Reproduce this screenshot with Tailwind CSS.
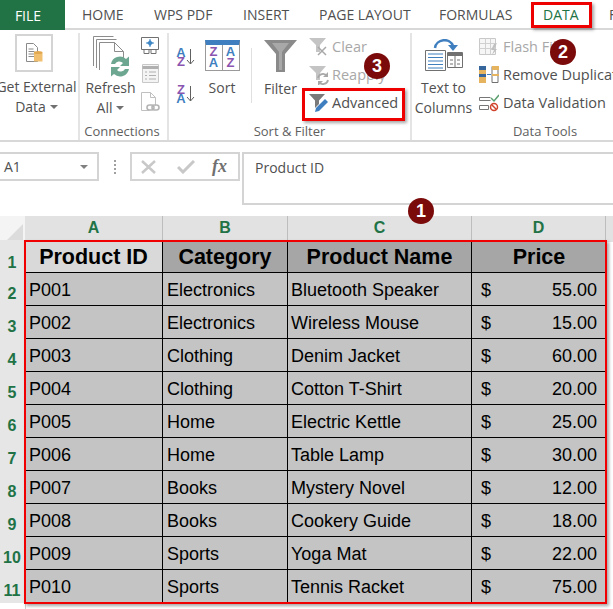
<!doctype html>
<html><head><meta charset="utf-8"><script src="https://cdn.jsdelivr.net/npm/@tailwindcss/browser@4"></script></head>
<body class="bg-white overflow-hidden">
<div class="relative w-[613px] h-[609px] overflow-hidden bg-white text-[#505050] font-['Open_Sans',sans-serif]">

<!-- tabs -->
<div class="flex items-center h-[30px] border-b-2 border-[#d8d8d8] text-[14px] text-[#505050] whitespace-nowrap">
  <div class="w-[65px] h-[30px] -mb-[2px] bg-[#217346] text-white flex items-center justify-center pr-[9px] shrink-0">FILE</div>
  <div class="ml-[17px] w-[72px] shrink-0">HOME</div>
  <div class="w-[89px] shrink-0">WPS PDF</div>
  <div class="w-[76px] shrink-0">INSERT</div>
  <div class="w-[120px] shrink-0">PAGE LAYOUT</div>
  <div class="w-[104px] shrink-0">FORMULAS</div>
  <div class="w-[66px] shrink-0 text-[#217346]">DATA</div>
  <div class="shrink-0">F</div>
</div>

<!-- ribbon -->
<div class="flex h-[112px] border-b-2 border-[#d8d8d8] text-[14px] leading-[20px] whitespace-nowrap">
  <!-- group 1 -->
  <div class="w-[78px] shrink-0 relative flex flex-col items-center pt-[4px]">
    <div class="w-[38px] h-[38px] border-2 border-[#d4d4d4] flex items-center justify-center ml-[-10px]">
      <svg width="18" height="20" viewBox="0 0 18 20"><path d="M1.500 .5h7l4 4v14h-11z" fill="#fff" stroke="#8a8a8a"/><path d="M3.500 6h5M3.500 8.500h6M3.500 11h6M3.500 13.500h6" stroke="#8a8a8a"/><path d="M9 9.500h8.500v9H9z" fill="#f0c070"/><ellipse cx="13.200" cy="9.500" rx="4.300" ry="1.600" fill="#e2a850"/></svg>
    </div>
    <div class="mt-[5px] text-center ml-[-5px] w-[84px] shrink-0">Get External</div>
    <div class="text-center ml-[-5px] flex items-center gap-[4px]">Data <span class="w-0 h-0 border-x-[4px] border-x-transparent border-t-[4px] border-t-[#707070]"></span></div>
  </div>
  <!-- group 2 -->
  <div class="w-[89px] shrink-0 border-l-2 border-[#e4e4e4] relative flex flex-col h-[107px] mt-[3px]">
    <div class="flex flex-1 pl-[5px]">
      <div class="w-[51px] flex flex-col items-center pt-[3px]">
        <svg width="38" height="42" viewBox="0 0 38 42" class="ml-[2px]">
          <path d="M.5 30V.5h20" fill="none" stroke="#8c8c8c"/><path d="M3.500 32V3.500h20" fill="none" stroke="#8c8c8c"/>
          <path d="M6.500 34V6.500h15l9 9v9" fill="#fff" stroke="#8c8c8c"/><path d="M21.500 6.500v9h9" fill="none" stroke="#8c8c8c"/>
          <path d="M18 28a9 9 0 0 1 15-5l3-2.500V30h-9l3-3a5 5 0 0 0-8 1z" fill="#6ea791"/>
          <path d="M36 32a9 9 0 0 1-15 5l-3 2.500V30h9l-3 3a5 5 0 0 0 8-1z" fill="#6ea791" transform="translate(0 1)"/>
        </svg>
        <div>Refresh</div>
        <div class="flex items-center gap-[4px]">All <span class="w-0 h-0 border-x-[4px] border-x-transparent border-t-[4px] border-t-[#707070]"></span></div>
      </div>
      <div class="w-[20px] flex flex-col items-center gap-[9px] ml-[4px] pt-[4px]">
        <svg width="19" height="18" viewBox="0 0 19 18"><path d="M.5.500h17v12H.5z" fill="#fff" stroke="#707070"/><path d="M9 3l3 3-3 3-3-3z" fill="#3f86c4"/><path d="M5 6h8M9 2v8" stroke="#3f86c4"/><path d="M3 13v3.500h5V13M10 13v3.500h5V13" fill="#fff" stroke="#707070"/></svg>
        <svg width="17" height="19" viewBox="0 0 17 19"><path d="M.5.500h16v18H.5z" fill="#f4f4f4" stroke="#c8c8c8"/><path d="M.5 3.500h16" stroke="#b0b0b0" stroke-width="3"/><path d="M3 8h2M3 11.500h2M3 15h2M7 8h7M7 11.500h7M7 15h7" stroke="#b0b0b0"/></svg>
        <svg width="19" height="20" viewBox="0 0 19 20"><path d="M.5.500h9l5 5v8M.5.500v18h8" fill="#fff" stroke="#c0c0c0"/><path d="M9.500.500v5h5" fill="none" stroke="#c0c0c0"/><rect x="6" y="13" width="7" height="5" rx="2.500" fill="none" stroke="#b4b4b4" stroke-width="1.600"/><rect x="11" y="13" width="7" height="5" rx="2.500" fill="none" stroke="#b4b4b4" stroke-width="1.600"/></svg>
      </div>
    </div>
    <div class="text-center text-[13px] text-[#606060] h-[22px] pt-[3px] pr-[3px]">Connections</div>
  </div>
  <!-- group 3 -->
  <div class="w-[243px] shrink-0 border-l-2 border-[#e4e4e4] relative flex flex-col h-[107px] mt-[3px]">
    <div class="flex flex-1">
      <div class="w-[30px] ml-[5px] flex flex-col items-start gap-[17px] pt-[14px] pl-[2px] text-[13px] font-bold leading-[9.500px] shrink-0">
        <div class="flex items-center w-[20px] h-[20px]"><div class="flex flex-col items-center w-[10px] font-['Liberation_Sans']"><span class="text-[#3f7fc0]">A</span><span class="text-[#8a55b0]">Z</span></div><svg width="9" height="18" viewBox="0 0 9 18"><path d="M4.500 1v15M1 12l3.500 4L8 12" fill="none" stroke="#606060"/></svg></div>
        <div class="flex items-center w-[20px] h-[20px]"><div class="flex flex-col items-center w-[10px] font-['Liberation_Sans']"><span class="text-[#8a55b0]">Z</span><span class="text-[#3f7fc0]">A</span></div><svg width="9" height="18" viewBox="0 0 9 18"><path d="M4.500 1v15M1 12l3.500 4L8 12" fill="none" stroke="#606060"/></svg></div>
      </div>
      <div class="w-[36px] flex flex-col items-center pt-[7px] shrink-0">
        <div class="w-[35px] h-[31px] border border-[#9a9a9a] border-t-[5px] border-t-[#3f7fbf] bg-white flex font-['Liberation_Sans'] font-bold text-[13px] leading-[11px] text-center">
          <div class="flex-1 border-r border-[#9a9a9a] flex flex-col pt-[1px]"><span class="text-[#8a55b0]">Z</span><span class="text-[#3f7fc0]">A</span></div>
          <div class="flex-1 flex flex-col pt-[1px]"><span class="text-[#3f7fc0]">A</span><span class="text-[#8a55b0]">Z</span></div>
        </div>
        <div class="mt-[7px]">Sort</div>
      </div>
      <div class="w-[12px] flex justify-end pt-[15px] shrink-0"><div class="w-[1px] h-[55px] bg-[#e0e0e0]"></div></div>
      <div class="w-[47px] ml-[5px] flex flex-col items-center pt-[7px] shrink-0">
        <svg width="33" height="32" viewBox="0 0 33 32"><path d="M0 0h33L21 14v18h-9V14z" fill="#8a8a8a"/><path d="M8 3h17l-7 9v18h-3V12z" fill="#bdbdbd" opacity=".6"/></svg>
        <div class="mt-[7px]">Filter</div>
      </div>
      <div class="flex flex-col pl-[5px] pt-[4px] gap-[8px] text-[14.500px]">
        <div class="flex items-center gap-[3px] h-[20px] text-[#a8a8a8]"><svg width="20" height="20" viewBox="0 0 20 20"><path d="M0 1h17l-6 7v7H7V8z" fill="#c4c4c4"/><path d="M9 10l8 8m0-8l-8 8" stroke="#a8a8a8" stroke-width="1.500"/></svg>Clear</div>
        <div class="flex items-center gap-[3px] h-[20px] text-[#a8a8a8]"><svg width="20" height="20" viewBox="0 0 20 20"><path d="M0 1h17l-6 7v7H7V8z" fill="#c4c4c4"/><path d="M9 13a5 5 0 0 1 9-2M19 15a5 5 0 0 1-9 2" fill="none" stroke="#a8a8a8" stroke-width="1.800"/><path d="M19 7v5h-5zM9 21v-5h5z" fill="#a8a8a8"/></svg>Reapply</div>
        <div class="flex items-center gap-[3px] h-[20px]"><svg width="20" height="20" viewBox="0 0 20 20"><path d="M0 1h16l-6 6.500V11L6 15V7.500z" fill="#7a7a7a"/><path d="M6 19l1-4 9-9 3 3-9 9z" fill="#3f7fbf"/></svg>Advanced</div>
      </div>
    </div>
    <div class="text-center text-[13px] text-[#606060] h-[22px] pt-[3px]">Sort &amp; Filter</div>
  </div>
  <!-- group 4 -->
  <div class="w-[268px] shrink-0 border-l-2 border-[#e4e4e4] relative flex flex-col h-[107px] mt-[3px]">
    <div class="flex flex-1">
      <div class="w-[55px] ml-[4px] flex flex-col items-center pt-[6px] shrink-0">
        <svg width="38" height="32" viewBox="0 0 38 32">
          <path d="M.5 11.500h20v20H.5z" fill="#fff" stroke="#707070"/><path d="M3 15h15M3 18.500h15M3 22h15M3 25.500h15M3 29h15" stroke="#3f7fbf"/>
          <path d="M22.500 13.500h15v15h-15z" fill="#fff" stroke="#707070"/><path d="M22.500 15.500h15" stroke="#707070" stroke-width="3"/><path d="M30 16v12M25 21h3M32 21h3M25 25h3M32 25h3" stroke="#707070"/>
          <path d="M10 9C11 0 25-2 28 7" fill="none" stroke="#3f7fbf" stroke-width="2.500"/><path d="M23 6h10l-5 6z" fill="#3f7fbf"/>
        </svg>
        <div class="mt-[7px]">Text to</div>
        <div>Columns</div>
      </div>
      <div class="flex flex-col pl-[8px] pt-[4px] gap-[8px] text-[14.500px]">
        <div class="flex items-center gap-[4px] h-[20px] text-[#a8a8a8]"><svg width="20" height="18" viewBox="0 0 20 18"><path d="M.5.500h16v16H.5z" fill="#f6f6f6" stroke="#c8c8c8"/><path d="M.5 5.500h16M.5 10.500h16M6.500.5v16M11.500.5v16" stroke="#d0d0d0"/><path d="M15 6l3-1-3 6h3l-5 6 2-5h-3z" fill="#c0c0c0"/></svg>Flash Fill</div>
        <div class="flex items-center gap-[4px] h-[20px]"><svg width="20" height="18" viewBox="0 0 20 18"><path d="M0 0h7v17H0z" fill="#e6b35e"/><path d="M0 0h7v4H0zM0 8h7v3H0z" fill="#37669c"/><path d="M13 .5h6v16h-6z" fill="#fff" stroke="#707070"/><path d="M13 0h7v4h-7zM13 8h7v2h-7z" fill="#e6b35e"/><path d="M8 8.500h4" stroke="#3f7fbf"/></svg>Remove Duplicates</div>
        <div class="flex items-center gap-[4px] h-[20px]"><svg width="20" height="18" viewBox="0 0 20 18"><path d="M.5 3.500h11M.5 3.500v3h11M.5 11.500h9v4h-9z" fill="none" stroke="#777"/><path d="M12 4l3 3 5-6" fill="none" stroke="#5aa070" stroke-width="1.500"/><circle cx="15" cy="13" r="3.500" fill="#fff" stroke="#d0442c" stroke-width="1.500"/><path d="M12.500 10.500l5 5" stroke="#d0442c" stroke-width="1.500"/></svg>Data Validation</div>
      </div>
    </div>
    <div class="text-center text-[13px] text-[#606060] h-[22px] pt-[3px]">Data Tools</div>
  </div>
</div>

<!-- formula bar -->
<div class="flex mt-[10px] h-[53px] text-[14px] text-[#505050]">
  <div class="w-[99px] h-[29px] border-2 border-l-0 border-[#d4d4d4] flex items-center justify-between pl-[4px] pr-[9px] shrink-0">A1 <span class="w-0 h-0 border-x-[4px] border-x-transparent border-t-[4px] border-t-[#808080]"></span></div>
  <div class="w-[31px] h-[29px] flex flex-col items-center justify-center gap-[2px] pl-[1px] shrink-0"><span class="w-[2px] h-[2px] bg-[#a0a0a0]"></span><span class="w-[2px] h-[2px] bg-[#a0a0a0]"></span><span class="w-[2px] h-[2px] bg-[#a0a0a0]"></span><span class="w-[2px] h-[2px] bg-[#a0a0a0]"></span></div>
  <div class="w-[110px] h-[29px] border-2 border-[#d4d4d4] flex items-center shrink-0 pl-[9px]">
    <svg width="16" height="14" viewBox="0 0 16 14"><path d="M1 1l13 12M14 1L1 13" stroke="#c8c8c8" stroke-width="2.500"/></svg>
    <svg class="ml-[20px]" width="18" height="14" viewBox="0 0 18 14"><path d="M1 7l5 5 11-11" fill="none" stroke="#c8c8c8" stroke-width="3"/></svg>
    <span class="ml-[17px] font-['Liberation_Serif'] italic font-bold text-[18px] text-[#707070]">fx</span>
  </div>
  <div class="flex-1 h-[53px] ml-[2px] border-2 border-r-0 border-[#d4d4d4] pl-[11px] pt-[3px]">Product ID</div>
</div>

<!-- sheet -->
<div class="mt-[11px] font-['Liberation_Sans'] text-black">
  <div class="grid grid-cols-[25px_138px_125px_184px_134px_7px] h-[24px] font-bold text-[16px] text-[#217346] text-center leading-[24px]">
    <div class="bg-[#f4f4f4] flex items-end justify-end pr-[2px] pb-[2px]"><div class="w-0 h-0 border-l-[16px] border-l-transparent border-b-[16px] border-b-[#dcdcdc]"></div></div>
    <div class="bg-[#e2e2e2] border-r border-[#bdbdbd] border-b-2 border-b-[#217346]">A</div>
    <div class="bg-[#e2e2e2] border-r border-[#bdbdbd] border-b-2 border-b-[#217346]">B</div>
    <div class="bg-[#e2e2e2] border-r border-[#bdbdbd] border-b-2 border-b-[#217346]">C</div>
    <div class="bg-[#e2e2e2] border-r border-[#bdbdbd] border-b-2 border-b-[#217346]">D</div>
    <div class="bg-[#e2e2e2] text-[#333]"></div>
  </div>
  <div class="grid grid-cols-[25px_138px_125px_184px_134px_7px] auto-rows-[33px] [&>div]:border-black font-bold text-[21.500px] text-center leading-[34px]">
    <div class="bg-[#e6e6e6] text-[16px] text-[#217346] pt-[13px] leading-[20px] pr-[1px]">1</div>
    <div class="bg-[#d9d9d9] border-r border-b">Product ID</div>
    <div class="bg-[#a6a6a6] border-r border-b">Category</div>
    <div class="bg-[#a6a6a6] border-r border-b">Product Name</div>
    <div class="bg-[#a6a6a6] border-b">Price</div>
    <div></div>
  </div>
  <div class="grid grid-cols-[25px_138px_125px_184px_134px_7px] auto-rows-[33px] text-[18px] leading-[34px] [&>div]:border-black">
    <div class="bg-[#e6e6e6] font-bold text-[16px] text-[#217346] text-center pr-[1px] pt-[4px]">2</div><div class="bg-[#c4c4c4] border-r border-b pl-[4px]">P001</div><div class="bg-[#c4c4c4] border-r border-b pl-[4px]">Electronics</div><div class="bg-[#c4c4c4] border-r border-b pl-[3px]">Bluetooth Speaker</div><div class="bg-[#c4c4c4] border-b flex justify-between pl-[9px] pr-[9px]"><span>$</span><span>55.00</span></div><div></div>
    <div class="bg-[#e6e6e6] font-bold text-[16px] text-[#217346] text-center pr-[1px] pt-[4px]">3</div><div class="bg-[#c4c4c4] border-r border-b pl-[4px]">P002</div><div class="bg-[#c4c4c4] border-r border-b pl-[4px]">Electronics</div><div class="bg-[#c4c4c4] border-r border-b pl-[3px]">Wireless Mouse</div><div class="bg-[#c4c4c4] border-b flex justify-between pl-[9px] pr-[9px]"><span>$</span><span>15.00</span></div><div></div>
    <div class="bg-[#e6e6e6] font-bold text-[16px] text-[#217346] text-center pr-[1px] pt-[4px]">4</div><div class="bg-[#c4c4c4] border-r border-b pl-[4px]">P003</div><div class="bg-[#c4c4c4] border-r border-b pl-[4px]">Clothing</div><div class="bg-[#c4c4c4] border-r border-b pl-[3px]">Denim Jacket</div><div class="bg-[#c4c4c4] border-b flex justify-between pl-[9px] pr-[9px]"><span>$</span><span>60.00</span></div><div></div>
    <div class="bg-[#e6e6e6] font-bold text-[16px] text-[#217346] text-center pr-[1px] pt-[4px]">5</div><div class="bg-[#c4c4c4] border-r border-b pl-[4px]">P004</div><div class="bg-[#c4c4c4] border-r border-b pl-[4px]">Clothing</div><div class="bg-[#c4c4c4] border-r border-b pl-[3px]">Cotton T-Shirt</div><div class="bg-[#c4c4c4] border-b flex justify-between pl-[9px] pr-[9px]"><span>$</span><span>20.00</span></div><div></div>
    <div class="bg-[#e6e6e6] font-bold text-[16px] text-[#217346] text-center pr-[1px] pt-[4px]">6</div><div class="bg-[#c4c4c4] border-r border-b pl-[4px]">P005</div><div class="bg-[#c4c4c4] border-r border-b pl-[4px]">Home</div><div class="bg-[#c4c4c4] border-r border-b pl-[3px]">Electric Kettle</div><div class="bg-[#c4c4c4] border-b flex justify-between pl-[9px] pr-[9px]"><span>$</span><span>25.00</span></div><div></div>
    <div class="bg-[#e6e6e6] font-bold text-[16px] text-[#217346] text-center pr-[1px] pt-[4px]">7</div><div class="bg-[#c4c4c4] border-r border-b pl-[4px]">P006</div><div class="bg-[#c4c4c4] border-r border-b pl-[4px]">Home</div><div class="bg-[#c4c4c4] border-r border-b pl-[3px]">Table Lamp</div><div class="bg-[#c4c4c4] border-b flex justify-between pl-[9px] pr-[9px]"><span>$</span><span>30.00</span></div><div></div>
    <div class="bg-[#e6e6e6] font-bold text-[16px] text-[#217346] text-center pr-[1px] pt-[4px]">8</div><div class="bg-[#c4c4c4] border-r border-b pl-[4px]">P007</div><div class="bg-[#c4c4c4] border-r border-b pl-[4px]">Books</div><div class="bg-[#c4c4c4] border-r border-b pl-[3px]">Mystery Novel</div><div class="bg-[#c4c4c4] border-b flex justify-between pl-[9px] pr-[9px]"><span>$</span><span>12.00</span></div><div></div>
    <div class="bg-[#e6e6e6] font-bold text-[16px] text-[#217346] text-center pr-[1px] pt-[4px]">9</div><div class="bg-[#c4c4c4] border-r border-b pl-[4px]">P008</div><div class="bg-[#c4c4c4] border-r border-b pl-[4px]">Books</div><div class="bg-[#c4c4c4] border-r border-b pl-[3px]">Cookery Guide</div><div class="bg-[#c4c4c4] border-b flex justify-between pl-[9px] pr-[9px]"><span>$</span><span>18.00</span></div><div></div>
    <div class="bg-[#e6e6e6] font-bold text-[16px] text-[#217346] text-center pr-[1px] pt-[4px]">10</div><div class="bg-[#c4c4c4] border-r border-b pl-[4px]">P009</div><div class="bg-[#c4c4c4] border-r border-b pl-[4px]">Sports</div><div class="bg-[#c4c4c4] border-r border-b pl-[3px]">Yoga Mat</div><div class="bg-[#c4c4c4] border-b flex justify-between pl-[9px] pr-[9px]"><span>$</span><span>22.00</span></div><div></div>
    <div class="bg-[#e6e6e6] font-bold text-[16px] text-[#217346] text-center pr-[1px] pt-[4px]">11</div><div class="bg-[#c4c4c4] border-r border-b pl-[4px]">P010</div><div class="bg-[#c4c4c4] border-r border-b pl-[4px]">Sports</div><div class="bg-[#c4c4c4] border-r border-b pl-[3px]">Tennis Racket</div><div class="bg-[#c4c4c4] border-b flex justify-between pl-[9px] pr-[9px]"><span>$</span><span>75.00</span></div><div></div>
  </div>
  <div class="ml-[25px] w-px h-[6px] bg-[#cfcfcf]"></div>
</div>

<!-- annotations -->
<div class="absolute left-[531px] top-[2px] w-[61px] h-[26px] border-[3px] border-[#ee0000] shadow-[2px_2px_3px_rgba(0,0,0,.35)]"></div>
<div class="absolute left-[302px] top-[88px] w-[103px] h-[33px] border-[3px] border-[#ee0000] shadow-[2px_2px_3px_rgba(0,0,0,.35)]"></div>
<div class="absolute left-[24px] top-[240px] w-[583px] h-[364px] border-[2px] border-[#f00000] shadow-[2px_2px_3px_rgba(0,0,0,.35)]"></div>
<div class="absolute left-[550px] top-[39px] w-[26px] h-[26px] rounded-full bg-[#7b0a0a] text-white font-['Liberation_Sans'] font-bold text-[18px] flex items-center justify-center">2</div>
<div class="absolute left-[364px] top-[53px] w-[26px] h-[26px] rounded-full bg-[#7b0a0a] text-white font-['Liberation_Sans'] font-bold text-[18px] flex items-center justify-center">3</div>
<div class="absolute left-[408px] top-[198px] w-[26px] h-[26px] rounded-full bg-[#7b0a0a] text-white font-['Liberation_Sans'] font-bold text-[18px] flex items-center justify-center">1</div>
</div>
</body></html>
